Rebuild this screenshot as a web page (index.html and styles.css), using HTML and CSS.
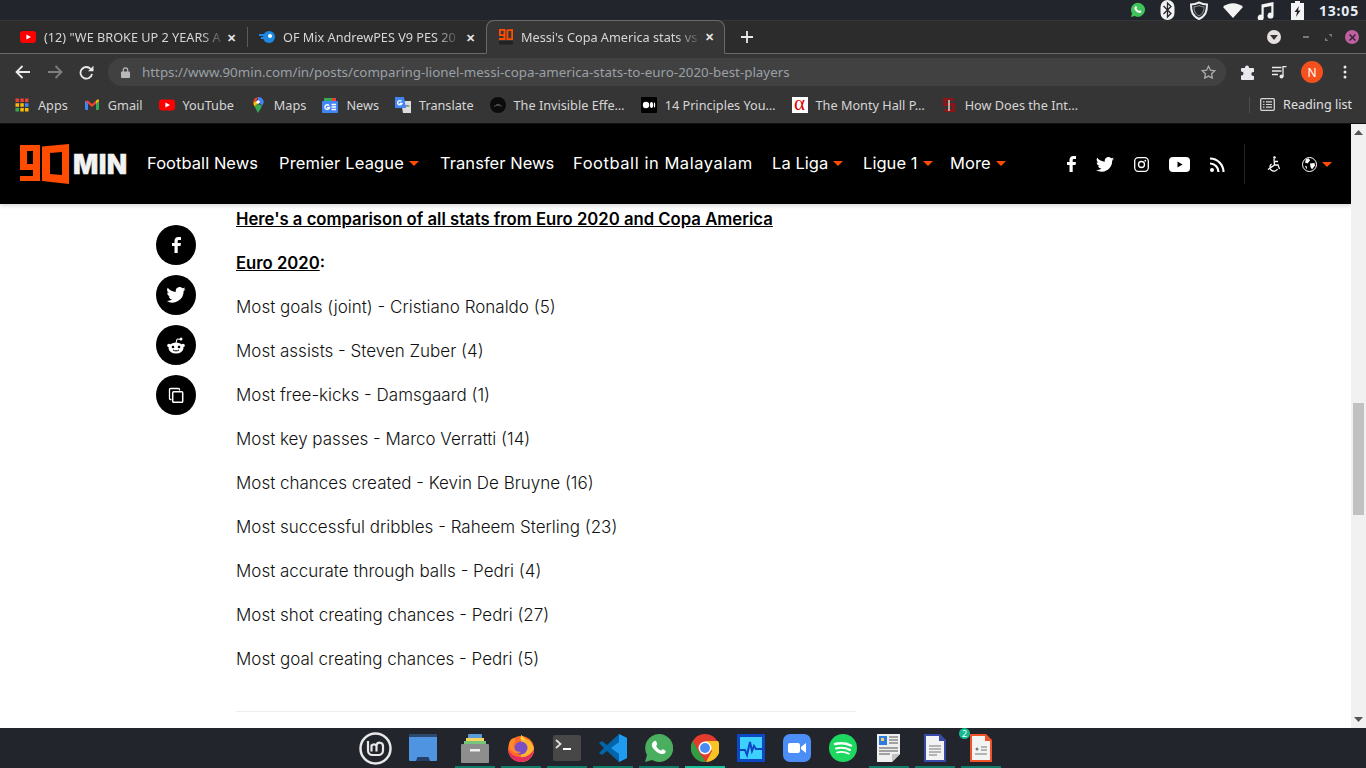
FILE: index.html
```html
<!DOCTYPE html>
<html lang="en">
<head>
<meta charset="utf-8">
<title>Messi's Copa America stats vs Euro 2020 best players</title>
<link rel="stylesheet" href="styles.css">
</head>
<body>
<div class="tray">
  <svg class="t-wa" width="16" height="16" viewBox="0 0 16 16"><path fill="#3fc35a" d="M8 .8a7 7 0 0 0-6 10.6L1 15l3.700-1A7 7 0 1 0 8 .8z"/><path fill="#fff" d="M5.600 4.200c.5-.3.8 0 1 .5l.4 1c.1.4-.5.9-.5 1.100.5 1 1.300 1.800 2.500 2.300.3-.1.700-.9 1.100-.7l1.100.6c.4.2.3.7 0 1.200-.6.8-1.600.9-2.600.6C6.800 10.200 5.200 8.700 4.500 7c-.4-1.100 0-2.200 1.100-2.800z"/></svg>
  <svg class="t-bt" width="15" height="20" viewBox="0 0 15 20"><rect x="0.500" width="14" height="20" rx="7" fill="#f2f2f2"/><path fill="none" stroke="#23262c" stroke-width="1.300" d="M3.500 6l7.500 7.500L7.500 17V3L11 6.500 3.500 14"/></svg>
  <svg class="t-sh" width="20" height="19" viewBox="0 0 20 19"><path fill="none" stroke="#eee" stroke-width="2" d="M10 1.500c3 1.500 5.500 2 8 2 0 7-1.500 11.500-8 14.500C3.500 15 2 10.500 2 3.500c2.500 0 5-.5 8-2z"/><path fill="#23262c" stroke="#999" d="M10 4.500c2 1 3.500 1.200 5 1.300 0 4-1 7-5 9.200-4-2.200-5-5.200-5-9.200 1.500-.1 3-.3 5-1.300z"/></svg>
  <svg class="t-wf" width="20" height="15" viewBox="0 0 20 15"><path fill="#f4f4f4" d="M10 15L0 4c5.500-5 14.500-5 20 0z"/></svg>
  <svg class="t-mu" width="18" height="19" viewBox="0 0 18 19"><path fill="#f4f4f4" d="M5.500 3.500L17.500 1v13.500a3 3 0 1 1-2.200-2.800V5L7.700 6.500v10a3 3 0 1 1-2.200-2.800z"/></svg>
  <svg class="t-ba" width="13" height="19" viewBox="0 0 13 19"><path fill="#f4f4f4" d="M4 0h5v2h4v17H0V2h4z"/><path fill="#23262c" d="M8 5L3.500 11H6l-1 5 4.500-6.500H7z"/></svg>
  <span class="clock">13:05</span>
</div>

<div class="tabstrip">
  <div class="tab">
    <svg class="fav" width="16" height="12" viewBox="0 0 16 12"><rect width="16" height="12" rx="3" fill="#f00"/><path fill="#fff" d="M6.400 3.400L11 6l-4.600 2.600z"/></svg>
    <span class="tab-title">(12) "WE BROKE UP 2 YEARS A</span>
    <span class="tab-x">✕</span>
  </div>
  <div class="tab-sep"></div>
  <div class="tab">
    <svg class="fav" width="16" height="12" viewBox="0 0 16 12"><circle cx="10" cy="6" r="6" fill="#1e88e5"/><path fill="#1e88e5" d="M0 3h6v2H0zM2 6h6v2H2z"/><circle cx="11" cy="5" r="2" fill="#fff"/></svg>
    <span class="tab-title">OF Mix AndrewPES V9 PES 20</span>
    <span class="tab-x">✕</span>
  </div>
  <div class="tab tab-active">
    <svg class="fav-90" width="14" height="16" viewBox="0 0 14 16"><path fill="#ff4c00" fill-rule="evenodd" d="M0 0h6.500v11H0V9h4.500V7H0zM1.800 1.800v3.400h2.800V1.800zM7.500 .5L14 0v11H7.500zM9.300 2v7.200h2.900V2z"/><rect y="12" width="14" height="3.500" fill="#222"/></svg>
    <span class="tab-title">Messi's Copa America stats vs</span>
    <span class="tab-x">✕</span>
  </div>
  <svg class="newtab" width="12" height="12" viewBox="0 0 12 12"><path stroke="#e8e8e8" stroke-width="1.800" d="M6 0v12M0 6h12"/></svg>
  <div class="win">
    <span class="win-drop"><svg width="8" height="5" viewBox="0 0 8 5"><path fill="#333" d="M0 0h8L4 5z"/></svg></span>
    <span class="win-min"></span>
    <svg class="win-max" width="7" height="7" viewBox="0 0 7 7"><path fill="#777" d="M3.500 0H7v3.500zM0 3.500V7h3.500z"/></svg>
    <span class="win-close"><svg width="7" height="7" viewBox="0 0 7 7"><path stroke="#3a2238" stroke-width="1.500" d="M.5.500l6 6M6.500.500l-6 6"/></svg></span>
  </div>
</div>

<div class="toolbar">
  <svg class="tb-back" width="16" height="14" viewBox="0 0 16 14"><path fill="none" stroke="#e8eaed" stroke-width="1.800" d="M15 7H2M7.500 1L1.500 7l6 6"/></svg>
  <svg class="tb-fwd" width="16" height="14" viewBox="0 0 16 14"><path fill="none" stroke="#7d7f82" stroke-width="1.800" d="M1 7h13M8.500 1l6 6-6 6"/></svg>
  <svg class="tb-rel" width="15" height="15" viewBox="0 0 15 15"><path fill="none" stroke="#e8eaed" stroke-width="1.800" d="M13 9a5.800 5.800 0 1 1-1.300-5"/><path fill="#e8eaed" d="M14.500.800v5.500H9z"/></svg>
  <div class="omni">
    <svg class="lock" width="9" height="11" viewBox="0 0 9 11"><path fill="#b8b8b8" d="M1 4.500h7a1 1 0 0 1 1 1V10a1 1 0 0 1-1 1H1a1 1 0 0 1-1-1V5.500a1 1 0 0 1 1-1z"/><path fill="none" stroke="#b8b8b8" stroke-width="1.200" d="M2.300 5V3a2.200 2.200 0 0 1 4.400 0v2"/></svg>
    <span class="url">https://www.90min.com/in/posts/comparing-lionel-messi-copa-america-stats-to-euro-2020-best-players</span>
    <svg class="star" width="15" height="14" viewBox="0 0 15 14"><path fill="none" stroke="#a9abad" stroke-width="1.300" d="M7.500 1.300l1.900 3.900 4.300.6-3.100 3 .7 4.300-3.800-2-3.800 2 .7-4.300-3.100-3 4.300-.6z"/></svg>
  </div>
  <svg class="tb-ext" width="15" height="15" viewBox="0 0 15 15"><path fill="#e8eaed" d="M5 2.500a2 2 0 0 1 4 0V3h4a1 1 0 0 1 1 1v3h-.7a2 2 0 0 0 0 4h.7v3a1 1 0 0 1-1 1H2a1 1 0 0 1-1-1v-3.500h.500a2 2 0 0 0 0-4H1V4a1 1 0 0 1 1-1h3z"/></svg>
  <svg class="tb-media" width="15" height="13" viewBox="0 0 15 13"><path stroke="#e8eaed" stroke-width="1.300" d="M0 1.500h9.500M0 5h9.500M0 8.500h6"/><path fill="none" stroke="#e8eaed" stroke-width="1.300" d="M11 10.500V.7h3.500"/><circle cx="9.500" cy="10.500" r="2" fill="#e8eaed"/></svg>
  <span class="avatar">N</span>
  <svg class="tb-menu" width="4" height="14" viewBox="0 0 4 14"><circle cx="2" cy="2" r="1.500" fill="#e8eaed"/><circle cx="2" cy="7" r="1.500" fill="#e8eaed"/><circle cx="2" cy="12" r="1.500" fill="#e8eaed"/></svg>
</div>

<div class="bookmarks">
  <div class="bm"><svg width="16" height="16" viewBox="0 0 16 16"><path fill="#ea4335" d="M1.500 1.500h3.500v3.500H1.500zM6.300 1.500h3.500v3.500H6.300zM11 1.500h3.500v3.500H11z"/><path fill="#fbbc04" d="M1.500 6.300h3.500v3.500H1.500zM6.300 6.300h3.500v3.500H6.300z"/><path fill="#34a853" d="M1.500 11h3.500v3.500H1.500z"/><path fill="#4285f4" d="M11 6.300h3.500v3.500H11z"/><path fill="#fbbc04" d="M6.300 11h3.500v3.500H6.300zM11 11h3.500v3.500H11z"/></svg><span>Apps</span></div>
  <div class="bm"><svg width="16" height="16" viewBox="0 0 16 16"><path fill="#4285f4" d="M1 4h3v9H2a1 1 0 0 1-1-1z"/><path fill="#34a853" d="M12 4h3v8a1 1 0 0 1-1 1h-2z"/><path fill="#ea4335" d="M4 3.500L8 7l4-3.500 3 .5L8 10 1 4z"/><path fill="#fbbc04" d="M13 2.800a1.200 1.200 0 0 1 2 1.200l-3 2.500V4z"/></svg><span>Gmail</span></div>
  <div class="bm"><svg width="16" height="16" viewBox="0 0 16 16"><rect y="2.500" width="16" height="11" rx="3" fill="#f00"/><path fill="#fff" d="M6.400 5.500L11 8l-4.600 2.500z"/></svg><span>YouTube</span></div>
  <div class="bm"><svg width="16" height="16" viewBox="0 0 16 16"><path fill="#34a853" d="M4.500 9.500L8 16c.8-2 3.500-4.500 4-7.500L8 7z"/><path fill="#fbbc04" d="M3.300 5.500c0 1.500.5 2.800 1.200 4L8 6.500 6 4z"/><path fill="#4285f4" d="M8 .200a4.800 4.800 0 0 1 4 8.300L8 4.500z"/><path fill="#ea4335" d="M4.800 1.500A4.800 4.800 0 0 0 3.300 5.500L6.500 3.500 8 .2c-1.200 0-2.300.5-3.200 1.300z"/><circle cx="8" cy="5" r="1.800" fill="#fff"/></svg><span>Maps</span></div>
  <div class="bm"><svg width="16" height="16" viewBox="0 0 16 16"><path fill="#34a853" d="M2 1h9v4H2z"/><path fill="#ea4335" d="M10 1h4v4h-4z"/><rect y="4" width="16" height="12" rx="1" fill="#4285f4"/><path stroke="#fff" stroke-width="1.300" d="M9.500 7.500h4.500M9.500 10h4.500M9.500 12.500h4.500"/><path fill="none" stroke="#fff" stroke-width="1.400" d="M7 8.500a2.300 2.300 0 1 0 .5 2H5"/></svg><span>News</span></div>
  <div class="bm"><svg width="16" height="16" viewBox="0 0 16 16"><path fill="#ddd" d="M6 4h10v12H8z"/><path fill="#4285f4" d="M0 0h9l2 11H0z"/><path fill="none" stroke="#fff" stroke-width="1.300" d="M6.500 4.300a2.200 2.200 0 1 0 .4 2.200H4.500"/><path stroke="#666" d="M10 9h4.500M12.200 8v1"/></svg><span>Translate</span></div>
  <div class="bm"><svg width="16" height="16" viewBox="0 0 16 16"><circle cx="8" cy="8" r="8" fill="#0b0b0b"/><path fill="none" stroke="#666" stroke-width=".8" d="M4 9h2l1-2 1 2 1-2 1 2h2"/></svg><span>The Invisible Effe…</span></div>
  <div class="bm"><svg width="16" height="16" viewBox="0 0 16 16"><rect width="16" height="16" rx="1" fill="#000"/><circle cx="5" cy="8" r="3.200" fill="#fff"/><ellipse cx="10.500" cy="8" rx="1.600" ry="3" fill="#fff"/><ellipse cx="13.500" cy="8" rx=".7" ry="2.700" fill="#fff"/></svg><span>14 Principles You…</span></div>
  <div class="bm"><span class="alpha">α</span><span>The Monty Hall P…</span></div>
  <div class="bm"><svg width="16" height="16" viewBox="0 0 16 16"><path fill="none" stroke="#8c1515" stroke-width="3" d="M12.500 2.500h-9v5h9v6h-9"/><path fill="#e6dcdc" d="M7.300 3h1.400v11H7.300z"/></svg><span>How Does the Int…</span></div>
  <div class="bm-spacer"></div>
  <div class="bm-rl"><svg width="15" height="13" viewBox="0 0 15 13"><rect x=".7" y=".7" width="13.600" height="11.600" rx="1" fill="none" stroke="#d5d5d5" stroke-width="1.300"/><path stroke="#d5d5d5" stroke-width="1.200" d="M3 3.800h1.500M6 3.800h6M3 6.500h1.500M6 6.500h6M3 9.200h1.500M6 9.200h6"/></svg><span>Reading list</span></div>
</div>

<div class="viewport">
  <div class="page">
    <header class="site-header">
      <svg class="logo90" width="50" height="40" viewBox="0 0 50 40"><path fill="#ff4c00" fill-rule="evenodd" d="M0 1h20v36H0v-5h13v-6H0zM7 7v13h6V7zM22 2.500L49 0v40l-27-3zM30 9v21l12 1V8z"/></svg>
      <span class="logomin">MIN</span>
      <nav class="nav">
        <a class="n1">Football News</a>
        <a class="n2">Premier League<i class="caret"></i></a>
        <a class="n3">Transfer News</a>
        <a class="n4">Football in Malayalam</a>
        <a class="n5">La Liga<i class="caret"></i></a>
        <a class="n6">Ligue 1<i class="caret"></i></a>
        <a class="n7">More<i class="caret"></i></a>
      </nav>
      <div class="social">
        <svg width="9" height="16" viewBox="0 0 9 16"><path fill="#fff" d="M2.500 16V9H0V6h2.500V4c0-2.700 1.500-4 3.800-4H9v3H7c-1 0-1.300.5-1.300 1.300V6H9l-.5 3H5.700v7z"/></svg>
        <svg width="18" height="15" viewBox="0 0 24 20"><path fill="#fff" d="M24 2.400a10 10 0 0 1-2.800.8A5 5 0 0 0 23.300.5a10 10 0 0 1-3.100 1.200 4.900 4.900 0 0 0-8.400 4.500A14 14 0 0 1 1.700.9a4.900 4.900 0 0 0 1.500 6.600 5 5 0 0 1-2.200-.6 5 5 0 0 0 3.900 4.900 5 5 0 0 1-2.200.1 5 5 0 0 0 4.600 3.400A10 10 0 0 1 0 17.300 14 14 0 0 0 21.500 5a10 10 0 0 0 2.500-2.600z"/></svg>
        <svg width="15" height="15" viewBox="0 0 15 15"><rect x=".7" y=".7" width="13.600" height="13.600" rx="3.500" fill="none" stroke="#fff" stroke-width="1.300"/><circle cx="7.500" cy="7.500" r="3" fill="none" stroke="#fff" stroke-width="1.300"/><circle cx="11.300" cy="3.700" r=".9" fill="#fff"/></svg>
        <svg width="21" height="15" viewBox="0 0 21 15"><rect width="21" height="15" rx="4" fill="#fff"/><path d="M8.500 4.500L13.500 7.500l-5 3z"/></svg>
        <svg width="15" height="15" viewBox="0 0 15 15"><circle cx="2" cy="13" r="2" fill="#fff"/><path fill="none" stroke="#fff" stroke-width="2.200" d="M0 6.500A8.500 8.500 0 0 1 8.500 15M0 1.500A13.500 13.500 0 0 1 13.500 15"/></svg>
      </div>
      <span class="hdr-sep"></span>
      <svg class="wheel" width="14" height="16" viewBox="0 0 14 16"><circle cx="7.500" cy="1.500" r="1.300" fill="#fff"/><path fill="none" stroke="#fff" stroke-width="1.300" d="M7 3l.5 6H11l1.500 4M1 13.500L7.500 9M4.500 8a4 4 0 1 0 6 5M8 5.500h3"/></svg>
      <svg class="globe" width="15" height="15" viewBox="0 0 15 15"><circle cx="7.500" cy="7.500" r="7" fill="none" stroke="#fff"/><path fill="#fff" d="M4 2l3-.5 1 2-2.500 3L3 5.500zM8 6.500l4.500-.5.500 2.500-3 4-1.500-2.500zM3 9l2 .5-.5 3z"/></svg>
      <i class="caret caret-globe"></i>
    </header>
    <div class="content">
      <aside class="share">
        <span class="round"><svg width="9" height="16" viewBox="0 0 9 16"><path fill="#fff" d="M2.500 16V9H0V6h2.500V4c0-2.700 1.500-4 3.800-4H9v3H7c-1 0-1.300.5-1.300 1.300V6H9l-.5 3H5.700v7z"/></svg></span>
        <span class="round"><svg width="20" height="16" viewBox="0 0 24 20"><path fill="#fff" d="M24 2.400a10 10 0 0 1-2.800.8A5 5 0 0 0 23.300.5a10 10 0 0 1-3.100 1.200 4.900 4.900 0 0 0-8.400 4.500A14 14 0 0 1 1.700.9a4.900 4.900 0 0 0 1.500 6.600 5 5 0 0 1-2.200-.6 5 5 0 0 0 3.900 4.900 5 5 0 0 1-2.200.1 5 5 0 0 0 4.600 3.400A10 10 0 0 1 0 17.300 14 14 0 0 0 21.500 5a10 10 0 0 0 2.500-2.600z"/></svg></span>
        <span class="round"><svg width="18" height="17" viewBox="0 0 18 17"><ellipse cx="9" cy="11" rx="7.500" ry="5.500" fill="#fff"/><circle cx="2" cy="8.500" r="1.800" fill="#fff"/><circle cx="16" cy="8.500" r="1.800" fill="#fff"/><circle cx="14" cy="2" r="1.500" fill="#fff"/><path fill="none" stroke="#fff" d="M9 6l1-4 4 .5"/><circle cx="6" cy="10" r="1.300"/><circle cx="12" cy="10" r="1.300"/><path fill="none" stroke="#000" d="M6 13c2 1.200 4 1.200 6 0"/></svg></span>
        <span class="round"><svg width="16" height="16" viewBox="0 0 16 16"><path fill="none" stroke="#fff" stroke-width="1.300" d="M3.500 12.500h-1a1 1 0 0 1-1-1v-9a1 1 0 0 1 1-1h8a1 1 0 0 1 1 1v1"/><rect x="4.700" y="4.700" width="10" height="10.600" rx="1" fill="none" stroke="#fff" stroke-width="1.500"/></svg></span>
      </aside>
      <article class="article">
        <p class="strong"><u>Here's a comparison of all stats from Euro 2020 and Copa America</u></p>
        <p class="strong"><u>Euro 2020</u>:</p>
        <p>Most goals (joint) - Cristiano Ronaldo (5)</p>
        <p>Most assists - Steven Zuber (4)</p>
        <p>Most free-kicks - Damsgaard (1)</p>
        <p>Most key passes - Marco Verratti (14)</p>
        <p>Most chances created - Kevin De Bruyne (16)</p>
        <p>Most successful dribbles - Raheem Sterling (23)</p>
        <p>Most accurate through balls - Pedri (4)</p>
        <p>Most shot creating chances - Pedri (27)</p>
        <p>Most goal creating chances - Pedri (5)</p>
        <hr class="rule">
      </article>
    </div>
  </div>
  <div class="scrollbar">
    <svg width="9" height="5" viewBox="0 0 9 5"><path fill="#555" d="M4.500 0L9 5H0z"/></svg>
    <span class="thumb"></span>
    <svg width="9" height="5" viewBox="0 0 9 5"><path fill="#555" d="M0 0h9L4.500 5z"/></svg>
  </div>
</div>

<footer class="dock">
  <span class="d d-mint"><svg width="33" height="33" viewBox="0 0 33 33"><circle cx="16.500" cy="16.500" r="15" fill="none" stroke="#e8e8e8" stroke-width="2.500"/><path fill="none" stroke="#e8e8e8" stroke-width="2.200" d="M9 9v9.500a4.500 4.500 0 0 0 4.500 4.500h6a4.500 4.500 0 0 0 4.500-4.500V14a3.300 3.300 0 0 0-6.500-.8v6.300M17.500 13.500a3.300 3.300 0 0 0-5 0v6"/></svg></span>
  <span class="d d-folder"><svg width="28" height="28" viewBox="0 0 28 28"><path fill="#2c4a6e" d="M0 1a1 1 0 0 1 1-1h26a1 1 0 0 1 1 1v3H0z"/><path fill="#4f94e0" d="M0 3h28v23a1 1 0 0 1-1 1H1a1 1 0 0 1-1-1z"/><path fill="#23406a" d="M7 27l1.500-4h11l1.500 4z"/></svg></span>
  <span class="d on"><svg width="28" height="29" viewBox="0 0 28 29"><path fill="#5a9bd8" d="M7 1a1 1 0 0 1 1-1h12a1 1 0 0 1 1 1v3H7z"/><path fill="#f4d35e" d="M5 4h18v3H5z"/><path fill="#78c47a" d="M3 7h22v3H3z"/><path fill="#8e8e8e" d="M0 11a1 1 0 0 1 1-1h26a1 1 0 0 1 1 1v17a1 1 0 0 1-1 1H1a1 1 0 0 1-1-1z"/><rect x="9" y="15" width="10" height="2.500" fill="#eee"/></svg></span>
  <span class="d on"><svg width="28" height="28" viewBox="0 0 28 28"><circle cx="14" cy="15" r="13" fill="#ff6a2b"/><path fill="#ffb52e" d="M14 1c4 3 6 5 8 5 3 3 5 7 5 9a13 13 0 0 1-13 13z"/><path fill="#e22f5f" d="M1 15a13 13 0 0 0 26 0c-3 6-9 9-14 8-5 0-10-3-12-8z"/><circle cx="14" cy="14" r="6.500" fill="#7a4fc4"/><path fill="#ff8a2b" d="M3 7c2-3 4-3 5-3-1 2 0 3 1 4-2 1-3 3-2 6 1 3 4 4 7 4-4 3-11 0-12-6 0-2 0-3 1-5z"/><path fill="#ffd23f" d="M14 1c2 2 4 4 4 7-1-2-3-3-5-3 1-1 1-2 1-4z"/></svg></span>
  <span class="d on"><svg width="28" height="26" viewBox="0 0 28 26"><rect width="28" height="26" rx="2" fill="#474747"/><path fill="none" stroke="#ddd" stroke-width="1.800" d="M3 5l4.500 4L3 13"/><path stroke="#fff" stroke-width="2" d="M10 14h8"/></svg></span>
  <span class="d on"><svg width="28" height="28" viewBox="0 0 28 28"><path fill="#0065a9" d="M20 0L8 11l-5-4-3 2 5 5-5 5 3 2 5-4 12 11 8-4V4z"/><path fill="#1f9cf0" d="M20 0l8 4v20l-8 4zM20 8l-8 6 8 6z"/></svg></span>
  <span class="d on"><svg width="28" height="28" viewBox="0 0 28 28"><path fill="#4aae5f" d="M14 0a14 14 0 0 0-12 21L0 28l7-2A14 14 0 1 0 14 0z"/><path fill="#fff" d="M9.500 7c1-.5 1.500 0 2 1l.7 2c.2.7-1 1.500-1 2 1 2 2.500 3.500 4.800 4.500.6-.2 1.300-1.700 2-1.300l2.200 1.200c.7.4.6 1.300 0 2.300-1.200 1.500-3 1.700-5 1.100C11.500 18.500 8.500 15.500 7 12.500 6.300 10.300 7.300 8.200 9.500 7z"/></svg></span>
  <span class="d on-bright"><svg width="28" height="28" viewBox="0 0 28 28"><circle cx="14" cy="14" r="14" fill="#e33b2e"/><path fill="#f7c325" d="M14 7h13a14 14 0 0 1-12 21l6-11z"/><path fill="#2f9e44" d="M1.900 7l6 11 7 10A14 14 0 0 1 1.900 7z"/><circle cx="14" cy="14" r="6.500" fill="#fff"/><circle cx="14" cy="14" r="5" fill="#4a8bf5"/></svg></span>
  <span class="d"><svg width="28" height="28" viewBox="0 0 28 28"><rect width="28" height="28" rx="1" fill="#0d47c4"/><rect x="3" y="3" width="22" height="22" fill="#3ed0ff"/><path fill="none" stroke="#0d47c4" stroke-width="2" d="M3 16h5l2 5 3-13 2 9 2-5 2 3h6"/></svg></span>
  <span class="d"><svg width="28" height="28" viewBox="0 0 28 28"><rect width="28" height="28" rx="7" fill="#4c8ef7"/><rect x="5" y="9" width="12" height="10" rx="2" fill="#fff"/><path fill="#fff" d="M18 13l5-4v10l-5-4z"/></svg></span>
  <span class="d"><svg width="28" height="28" viewBox="0 0 28 28"><circle cx="14" cy="14" r="14" fill="#1ed760"/><path fill="none" stroke="#fff" stroke-linecap="round" stroke-width="2.500" d="M6 10c5.500-1.500 11-1 16 1.500"/><path fill="none" stroke="#fff" stroke-linecap="round" stroke-width="2" d="M7 14.500c5-1.200 9.500-.8 14 1.500"/><path fill="none" stroke="#fff" stroke-linecap="round" stroke-width="1.700" d="M8 18.500c4-1 8-.7 12 1.200"/></svg></span>
  <span class="d on"><svg width="25" height="28" viewBox="0 0 25 28"><path fill="#efefef" d="M0 0h23v20l-8 8H0z"/><path fill="#c4c4c4" d="M15 28v-8h8z"/><rect x="2" y="2" width="8" height="9" fill="#2b7de0"/><rect x="4" y="4" width="3" height="3" fill="#f4d35e"/><path stroke="#888" stroke-width="1.300" d="M12 3h9M12 6h9M12 9h9M2 14h19M2 17h19M2 20h11"/></svg></span>
  <span class="d on"><svg width="22" height="28" viewBox="0 0 22 28"><path fill="#3a4aa8" d="M0 0h16l6 6v22H0z"/><path fill="#f3f3f3" d="M2 2h13l5 5v19H2z"/><path fill="#3a4aa8" d="M15 1l6 6h-6z"/><path stroke="#777" stroke-width="1.200" d="M5 12h12M5 15h12M5 18h12M5 21h8"/></svg></span>
  <span class="d on"><svg width="22" height="28" viewBox="0 0 22 28"><path fill="#f0532a" d="M0 0h16l6 6v22H0z"/><path fill="#f3f3f3" d="M2 2h13l5 5v19H2z"/><path fill="#f0532a" d="M15 1l6 6h-6z"/><circle cx="7" cy="15" r="1.500" fill="#777"/><path stroke="#777" stroke-width="1.200" d="M11 13h6M11 16h6M5 20h12"/></svg><b class="badge">2</b></span>
</footer>
</body>
</html>
```

FILE: styles.css
```css
* { box-sizing: border-box; }
html, body { margin: 0; height: 100%; overflow: hidden; }
body {
  width: 1366px; height: 768px;
  display: flex; flex-direction: column;
  font-family: "Noto Sans", "Open Sans", sans-serif;
  background: #23252b; color: #e8eaed;
}
svg { display: block; flex: none; }

/* system tray */
.tray { height: 20px; background: #22252b; display: flex; align-items: center; padding-left: 1130px; flex: none; }
.t-wa { margin-right: 14px; }
.t-bt { margin-right: 14px; }
.t-sh { margin-right: 14px; }
.t-wf { margin-right: 13px; }
.t-mu { margin-right: 17px; }
.t-ba { margin-right: 15px; }
.clock { font: 700 14px "Noto Sans", sans-serif; color: #e6edf5; letter-spacing: .8px; }

/* tabs */
.tabstrip { height: 34px; background: #2c2c2c; border-top: 1px solid #34363a; border-bottom: 1px solid #6a6a6a; display: flex; align-items: center; flex: none; padding-left: 20px; }
.tab { width: 227px; height: 32px; padding-right: 11px; display: flex; align-items: center; flex: none; }
.tab-title { font-size: 12.700px; color: #d6d6d6; margin-left: 8px; white-space: nowrap; -webkit-mask-image: linear-gradient(90deg, #000 88%, rgba(0,0,0,.2) 100%); mask-image: linear-gradient(90deg, #000 88%, rgba(0,0,0,.2) 100%); }
.tab-x { font-size: 11px; color: #e6e6e6; margin-left: auto; font-weight: 700; }
.tab-sep { width: 1px; height: 20px; background: #5a5a5a; flex: none; margin-right: 11px; }
.tab-active { height: 34px; width: 239px; padding: 0 10px 0 12px; background: #363636; border: 1px solid #6a6a6a; border-bottom-color: #363636; border-radius: 8px 8px 0 0; position: relative; top: -1px; margin-bottom: -1px; }
.newtab { margin-left: 16px; }
.win { margin-left: auto; display: flex; align-items: center; padding-right: 7px; }
.win-drop { width: 14px; height: 14px; border-radius: 50%; background: #e6e0e0; display: flex; align-items: center; justify-content: center; margin-right: 22px; }
.win-min { width: 6px; height: 2px; background: #777; margin-right: 16px; }
.win-max { margin-right: 13px; }
.win-close { width: 14px; height: 14px; border-radius: 50%; background: #c0609f; display: flex; align-items: center; justify-content: center; }

/* toolbar */
.toolbar { height: 33px; background: #353535; display: flex; align-items: center; flex: none; padding-left: 15px; padding-top: 3px; }
.tb-fwd { margin-left: 16px; }
.tb-rel { margin-left: 16px; }
.omni { margin-left: 14px; width: 1118px; height: 28px; background: #414141; border-radius: 14px; display: flex; align-items: center; padding-left: 13px; }
.lock { margin-right: 12px; }
.url { font-size: 13.350px; color: #9aa0a6; white-space: nowrap; }
.star { margin-left: auto; margin-right: 10px; }
.tb-ext { margin-left: 14px; }
.tb-media { margin-left: 17px; }
.avatar { width: 22px; height: 22px; border-radius: 50%; background: #f4511e; color: #fff; font-size: 12px; display: flex; align-items: center; justify-content: center; margin-left: 14px; }
.tb-menu { margin-left: 20px; }

/* bookmarks */
.bookmarks { height: 37px; background: #353535; display: flex; align-items: center; flex: none; padding: 0 14px 1px 14px; border-bottom: 1px solid #111; }
.bm { display: flex; align-items: center; gap: 8px; margin-right: 16px; font-size: 12.700px; color: #d6d6d6; white-space: nowrap; }
.alpha { width: 16px; height: 16px; background: #fff; color: #d00; font: 400 21px/13px "Liberation Serif", serif; text-align: center; display: block; }
.bm-spacer { flex: 1; border-right: 1px solid #4c4c4c; height: 16px; margin-right: 11px; }
.bm-rl { display: flex; align-items: center; gap: 8px; font-size: 12.600px; color: #e0e0e0; margin-left: -1px; }

/* page */
.viewport { height: 604px; display: flex; background: #fff; flex: none; }
.page { width: 1351px; flex: none; overflow: hidden; }
.scrollbar { width: 15px; background: #f1f1f1; display: flex; flex-direction: column; align-items: center; padding: 6px 0; }
.thumb { width: 11px; height: 112px; background: #c1c1c1; margin-top: 268px; margin-bottom: auto; }

.site-header { height: 80px; background: #000; display: flex; align-items: center; box-shadow: 0 2px 4px rgba(0,0,0,.15); padding-left: 20px; position: relative; }
.logo90 { width: 50px; height: 40px; }
.logomin { font: 900 26.500px "Inter", sans-serif; color: #f2f2f2; margin-left: 3px; width: 74px; -webkit-text-stroke: .3px #f2f2f2; letter-spacing: .4px; }
.nav { display: flex; align-items: center; font: 400 16.500px/24px "Inter", sans-serif; letter-spacing: .05px; color: #fff; padding-bottom: 2px; }
.nav a { display: flex; align-items: center; white-space: nowrap; }
.n1 { width: 132px; }
.n2 { width: 161px; letter-spacing: .15px; }
.n3 { width: 133px; }
.n4 { width: 199px; letter-spacing: .55px; }
.n5 { width: 91px; }
.n6 { width: 87px; }
.n7 { width: 80px; }
.caret { display: block; width: 0; height: 0; border: 5px solid transparent; border-top: 5px solid #ff4c00; border-bottom: 0; margin-left: 5px; }
.social { display: flex; align-items: center; gap: 20px; margin-left: 37px; }
.hdr-sep { width: 1px; height: 40px; background: #222; margin-left: 19px; }
.wheel { margin-left: 22px; }
.globe { margin-left: 21px; }
.caret-globe { margin-left: 5px; }

.content { display: flex; padding: 21px 0 0 156px; height: 524px; font-family: "Inter", sans-serif; }
.share { display: flex; flex-direction: column; gap: 10px; width: 80px; flex: none; }
.round { width: 40px; height: 40px; border-radius: 50%; background: #000; display: flex; align-items: center; justify-content: center; }
.article { width: 620px; margin-top: -20px; color: #111; font-size: 17px; font-weight: 300; }
.article p { margin: 0 0 16px; line-height: 28px; white-space: nowrap; }
.article .strong { font-weight: 600; color: #000; font-size: 16.700px; }
.rule { border: 0; border-top: 1px solid #eee; margin: 38px 0 0; }

/* dock */
.dock { height: 40px; background: #22252b; display: flex; padding-left: 352px; flex: none; }
.d { width: 46px; height: 40px; display: flex; align-items: center; justify-content: center; position: relative; flex: none; }
.d-mint { margin-right: 2px; }
.d-folder { margin-right: 6px; }
.on::after, .on-bright::after { content: ""; position: absolute; left: 3px; right: 3px; bottom: 0; height: 2px; background: #0e7c66; }
.on-bright::after { background: #16c09a; }
.badge { position: absolute; left: 1px; top: 0; width: 11px; height: 11px; border-radius: 50%; background: #16b98f; color: #fff; font: 400 9px/11px "Noto Sans", sans-serif; text-align: center; }
```
